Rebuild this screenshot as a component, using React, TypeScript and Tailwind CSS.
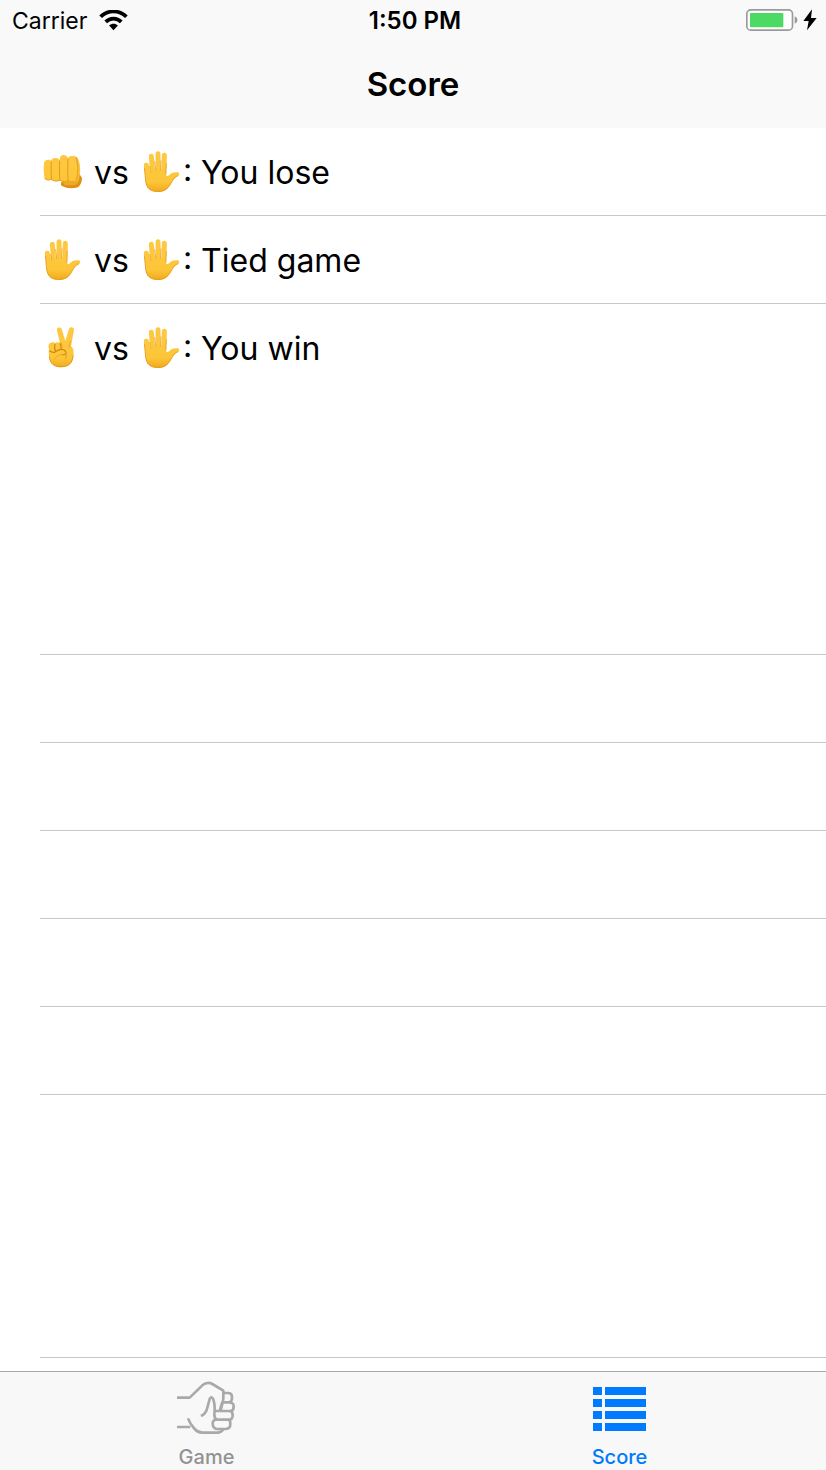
import type { ReactNode } from "react";

type Move = "rock" | "paper" | "scissors";

function SkinGradient({ id }: { id: string }) {
  return (
    <defs>
      <linearGradient id={id} gradientUnits="userSpaceOnUse" x1="0" y1="0" x2="0" y2="126">
        <stop offset="0" stopColor="#fdc845" />
        <stop offset="0.75" stopColor="#fdc638" />
        <stop offset="1" stopColor="#f0a91f" />
      </linearGradient>
    </defs>
  );
}

function Rock() {
  return (
    <svg viewBox="0 0 132 132" className="size-11 shrink-0" role="img" aria-label="Rock">
      <SkinGradient id="rock" />
      <path d="M66 94C62 100 61 107 68 109C80 116 98 116 114 112C121 107 126 96 126 84L117 70Z" fill="#dc9114" />
      <path d="M70 95C69 103 74 106 83 106C96 106 111 108 117 94L119 84Z" fill="#efa923" />
      <path d="M12 40C13 33 17 29 24 29C29 29 32 30 33 33C35 25 41 23 49 24C54 25 57 27 59 31C59 19 64 15 70 15C77 15 82 18 84 24C87 19 92 18 100 18C109 18 115 23 117 33C122 49 122 69 117 83C114 93 108 97 99 96C92 97 88 96 84 92C78 97 65 97 60 91C54 95 39 96 35 89C28 92 18 91 14 86C11 72 10 54 12 40Z" fill="url(#rock)" />
      <path d="M34 36C33 52 33 72 35 88M59 33C58 50 58 74 60 91M84 28C83 48 83 73 84 92" fill="none" stroke="#e69a18" strokeWidth="3" strokeLinecap="round" />
      <path d="M108 22C115 39 116 72 109 91" fill="none" stroke="#e7a32a" strokeWidth="4" />
      <path d="M14 84C18 90 28 92 34 87C40 95 54 94 60 90C66 96 78 96 84 91C92 97 103 96 109 91" fill="none" stroke="#e39b20" strokeWidth="2.5" />
    </svg>
  );
}

function Paper() {
  return (
    <svg viewBox="0 0 132 132" className="size-11 shrink-0" role="img" aria-label="Paper">
      <SkinGradient id="paper" />
      <path d="M22 46L29 90M37 19L42 80M57 11L58 80M76 16L74 85" fill="none" stroke="url(#paper)" strokeWidth="15" strokeLinecap="round" />
      <path d="M18 66L35 63L50 58L65 58L80 66L81 73C81 78 84 80 88 77C96 68 106 65 117 67C123 70 122 76 116 79C107 83 102 91 96 101C87 119 74 126 55 126C35 126 22 115 20 96Z" fill="url(#paper)" />
      <path d="M16 53L20 93C22 113 34 124 54 124C73 125 86 118 95 101C103 87 107 81 117 77" fill="none" stroke="#e59a1d" strokeWidth="2.5" />
      <path d="M32 50L35 66M47 35L50 60M66 32L65 60M82 40L80 72" fill="none" stroke="#e8a127" strokeWidth="2.5" strokeLinecap="round" />
    </svg>
  );
}

function Scissors() {
  return (
    <svg viewBox="0 0 132 132" className="size-11 shrink-0" role="img" aria-label="Scissors">
      <SkinGradient id="scissors" />
      <path d="M27 68C24 59 26 51 33 50C39 48 44 49 45 53C49 47 56 48 60 52L51 14C49 5 60 1 65 9L76 44L87 9C90 1 103 3 102 12L93 61C101 67 102 78 100 91C98 113 85 124 64 124C42 124 30 113 28 95C26 86 26 77 27 68Z" fill="url(#scissors)" />
      <path d="M28 91C30 113 43 122 64 122C86 122 98 111 99 88" fill="none" stroke="#e49a1e" strokeWidth="3" />
      <path d="M45 54C43 65 44 73 48 77M60 53C63 61 65 67 63 70M29 75C37 80 44 80 48 76C58 70 70 69 76 75C81 82 77 87 68 86" fill="none" stroke="#d18312" strokeWidth="3.5" strokeLinecap="round" strokeLinejoin="round" />
      <path d="M68 86C56 86 47 91 43 100M62 48L67 63M91 46L87 64" fill="none" stroke="#e8a127" strokeWidth="2.5" strokeLinecap="round" />
      <path d="M77 82C80 87 79 92 77 97" fill="none" stroke="#dc9519" strokeWidth="2.5" strokeLinecap="round" />
    </svg>
  );
}

const hands: Record<Move, () => ReactNode> = { rock: Rock, paper: Paper, scissors: Scissors };

const games: { player: Move; opponent: Move; result: string }[] = [
  { player: "rock", opponent: "paper", result: "You lose" },
  { player: "paper", opponent: "paper", result: "Tied game" },
  { player: "scissors", opponent: "paper", result: "You win" },
];

const emptyRows = [1, 2, 3, 4, 5];

function StatusBar() {
  return (
    <div className="grid h-[42px] grid-cols-3 items-center pr-2 pl-3 text-2xl leading-10">
      <div className="flex items-center gap-3 text-[23px]">
        <span>Carrier</span>
        <svg viewBox="0 0 84 62" className="mb-0.5 h-[21px] w-[29px]" aria-label="Wi-Fi" role="img">
          <path d="M4 20C25-1 59-1 80 20M19 35C32 22 52 22 65 35" fill="none" stroke="#000" strokeWidth="11" />
          <path d="M29 46C37 39 47 39 55 46L42 60Z" fill="#000" />
        </svg>
      </div>
      <span className="text-center font-semibold">1:50 PM</span>
      <div className="flex items-center justify-end gap-1 pb-0.5">
        <svg viewBox="0 0 156 66" className="h-[22px] w-[52px]" role="img" aria-label="Battery charging">
          <rect x="2.5" y="2.5" width="137" height="61" rx="12" fill="#fff" stroke="#9b9b9d" strokeWidth="5" />
          <rect x="12" y="12" width="100" height="43" rx="3" fill="#4cd964" />
          <path d="M146 22C157 26 157 40 146 44Z" fill="#9b9b9d" />
        </svg>
        <svg viewBox="0 0 42 66" className="h-[22px] w-4" aria-hidden="true">
          <path d="M27 1L1 36H17L12 64L41 27H24Z" fill="#000" />
        </svg>
      </div>
    </div>
  );
}

function GameIcon() {
  return (
    <svg viewBox="0 0 180 180" className="size-[60px]" fill="none" stroke="#a9a9a9" strokeWidth="8" strokeLinejoin="round" aria-hidden="true">
      <path d="M0 53H38L76 16Q91 3 106 12L139 32V55Q139 63 134 72L128 93" />
      <path d="M139 39H155Q165 40 165 51Q166 64 157 67H139M157 67Q171 68 170 80Q170 92 160 93H128M137 67L131 92" />
      <path d="M128 93H115Q112 94 112 103Q112 116 120 119H158Q167 118 167 105Q167 94 158 93" />
      <path d="M119 119Q108 118 107 130Q107 144 118 147H147Q160 146 160 132Q160 122 155 119" />
      <path d="M113 95Q114 70 108 56Q102 47 98 57L91 83Q87 101 72 108" />
      <path d="M33 115Q39 132 53 147Q62 157 76 158H123Q133 157 139 148M40 141H0" />
    </svg>
  );
}

function ScoreIcon() {
  return (
    <svg viewBox="0 0 54 46" className="h-[46px] w-[54px]" fill="#007aff" aria-hidden="true">
      <path d="M0 0h9v8H0zM0 12h9v8H0zM0 24h9v8H0zM0 36h9v8H0zM12 0h41v8H12zM12 12h41v8H12zM12 24h41v8H12zM12 36h41v8H12z" />
    </svg>
  );
}

function Tab({ icon, label, active }: { icon: ReactNode; label: string; active?: boolean }) {
  return (
    <button
      type="button"
      aria-current={active ? "page" : undefined}
      className={`flex flex-1 flex-col items-center pt-1.5 text-xl leading-6 font-medium ${active ? "text-[#007aff]" : "text-[#929292]"}`}
    >
      <span className="flex h-[67px] items-center pb-1">{icon}</span>
      {label}
    </button>
  );
}

export default function App() {
  return (
    <div className="flex min-h-screen flex-col bg-white font-['Inter','Liberation_Sans',sans-serif] text-black">
      <header className="h-32 bg-[#f9f9f9]">
        <StatusBar />
        <h1 className="text-center text-[33px] leading-[84px] font-semibold">Score</h1>
      </header>
      <main className="flex flex-1 flex-col pl-10">
        <ul>
          {games.map(({ player, opponent, result }, index) => {
            const Player = hands[player];
            const Opponent = hands[opponent];
            return (
              <li key={index} className="flex h-22 items-center border-b border-[#c8c7cc] text-[32px] last:border-transparent">
                <Player />
                <span className="px-2.5 pt-0.5">vs</span>
                <Opponent />
                <span className="pt-0.5">: {result}</span>
              </li>
            );
          })}
        </ul>
        <div className="mt-[262px] border-t border-[#c8c7cc]" aria-hidden="true">
          {emptyRows.map((row) => (
            <div key={row} className="h-22 border-b border-[#c8c7cc]" />
          ))}
        </div>
        <div className="mt-auto h-3.5 border-t border-[#c8c7cc]" />
      </main>
      <nav className="flex h-[99px] border-t border-[#a9a9ac] bg-[#f8f8f8]" aria-label="Main">
        <Tab icon={<GameIcon />} label="Game" />
        <Tab icon={<ScoreIcon />} label="Score" active />
      </nav>
    </div>
  );
}
